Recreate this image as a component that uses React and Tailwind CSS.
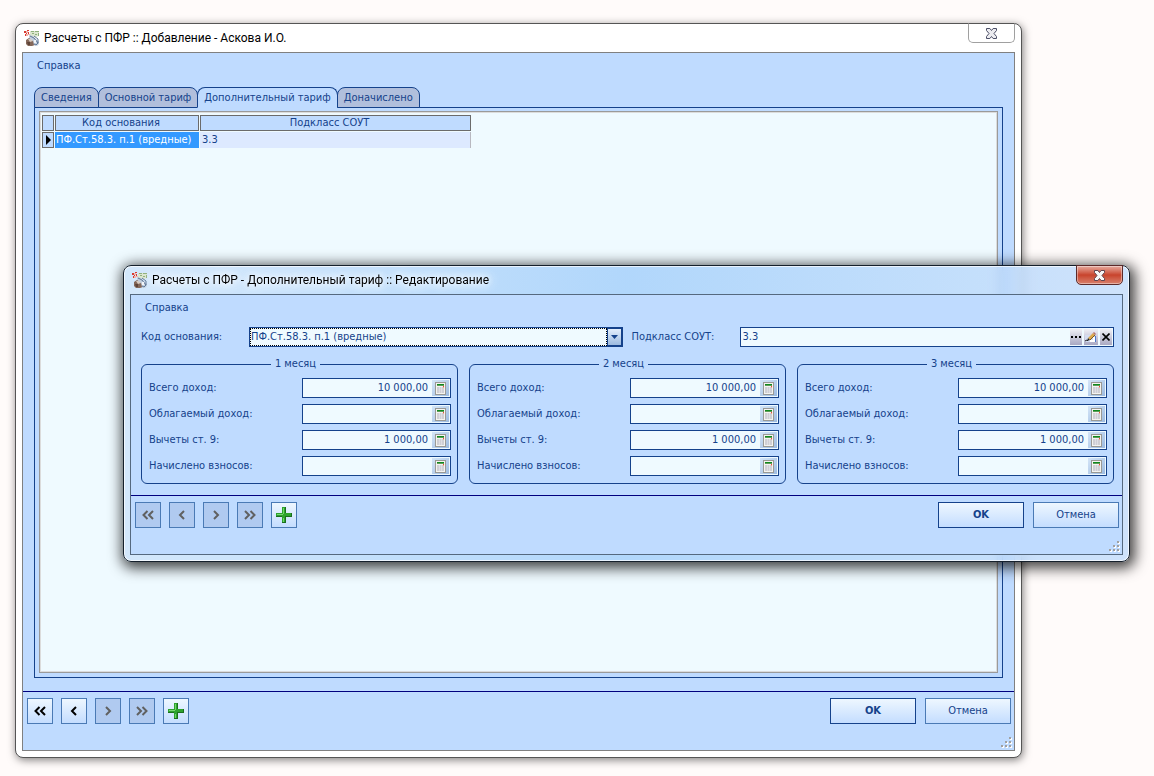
import React, { useState } from 'react';

const tabs = ['Сведения', 'Основной тариф', 'Дополнительный тариф', 'Доначислено'];

const months = [
    { id: 'm1', title: '1 месяц' },
    { id: 'm2', title: '2 месяц' },
    { id: 'm3', title: '3 месяц' },
];

const rows = [
    { id: 'total', label: 'Всего доход:', value: '10 000,00' },
    { id: 'taxable', label: 'Облагаемый доход:', value: '' },
    { id: 'deduct', label: 'Вычеты ст. 9:', value: '1 000,00' },
    { id: 'charged', label: 'Начислено взносов:', value: '' },
];

const AppIcon = () => (
    <svg width="16" height="16" viewBox="0 0 16 16" aria-hidden="true">
        <path d="M6 1h9v5l-3 1-6-1z" fill="#dbe6cf" />
        <path d="M7 1h3v1H7zM11 1h4v1h-4zM8 3h2v1H8zM14 3h1v3h-1zM11 4h2v1h-2z" fill="#8fb07c" />
        <path d="M0 1h2v2H0zM3 0h2v1H3zM1 4h1v2H1zM4 2h1v2H4zM2 3h1v1H2z" fill="#d93a30" />
        <path d="M2 1h2v2H2zM4 4h2v1H4zM2 4h2v2H2z" fill="#f0b5ae" />
        <path d="M2 10l3-2h4l2 3v4l-3 1H4l-2-2z" fill="#84685a" />
        <path d="M4 9h4l1 2-3 1z" fill="#d9cbc0" />
        <path d="M5 5l4 1 6 6v2l-2 2-3-1-1-4-4-3z" fill="#c3cfde" />
        <path d="M6 6l4 2 4 5M10 6l4 3v4l-2 2-2-1" stroke="#5d7594" strokeWidth="1" fill="none" />
        <path d="M10 10h2v3h-2z" fill="#f2f5f9" />
        <path d="M3 12h3v3H4z" fill="#5f4438" />
    </svg>
);

const CloseCross = ({ dark }) => (
    <svg width="13" height="11" viewBox="0 0 13 11" aria-hidden="true">
        <path
            d="M1.500.5h3.400l1.600 2 1.600-2h3.400v2L9 5.500l2.500 3v2H8.100l-1.600-2-1.600 2H1.500v-2l2.500-3-2.500-3z"
            fill={dark ? '#ececf0' : '#f7f7f7'}
            stroke={dark ? '#4b4e66' : '#5f4550'}
            strokeWidth="1"
        />
    </svg>
);

const Chevrons = ({ dir, double }) => (
    <svg
        width="14"
        height="10"
        viewBox="0 0 14 10"
        fill="none"
        stroke="currentColor"
        strokeWidth="2"
        className={dir === 'right' ? 'rotate-180' : ''}
        aria-hidden="true"
    >
        {double ? <path d="M6.500 1L2.500 5l4 4M12 1L8 5l4 4" /> : <path d="M9 1L5 5l4 4" />}
    </svg>
);

const Plus = () => (
    <svg width="16" height="16" viewBox="0 0 16 16" aria-hidden="true">
        <path d="M6 0h4v6h6v4h-6v6H6v-6H0V6h6z" fill="#1b6e1f" />
        <path d="M6 0h3v6h6v3H9v6H6V9H0V6h6z" fill="#2ea32e" />
        <path d="M7 1h1v6H7zM7 11h1v4H7z" fill="#6fd868" />
        <path d="M1 7h6v1H1z" fill="#7bd874" />
    </svg>
);

const Calc = () => (
    <svg width="11" height="13" viewBox="0 0 11 13" aria-hidden="true">
        <rect x=".5" y=".5" width="10" height="12" fill="#f4f4f0" stroke="#9a9a96" />
        <rect x="2" y="2" width="7" height="1" fill="#0f8a1c" />
        <rect x="2" y="3" width="7" height="1" fill="#5f9a5a" />
        <rect x="2" y="5" width="7" height="6" fill="#cfcfd4" />
        <path d="M4 5h1v6H4zM6 5h1v6H6z" fill="#dedee4" />
        <rect x="8" y="4" width="1" height="1" fill="#e8503c" />
        <rect x="8" y="5" width="1" height="1" fill="#f0a090" />
    </svg>
);

const Pencil = () => (
    <svg width="12" height="12" viewBox="0 0 12 12" aria-hidden="true">
        <path d="M0 4h6l4 2v5H0z" fill="#d4dcf2" />
        <path d="M5 10h4V6" stroke="#fff" strokeWidth="2" fill="none" />
        <path d="M10.500 5v6" stroke="#4c78cc" strokeWidth="1" />
        <path d="M3 7l5-5 2 2-5 5z" fill="#dca94e" />
        <path d="M5 9l5-5" stroke="#7a5a22" strokeWidth="1" />
        <path d="M8 2l1-1 2 2-1 1z" fill="#b5706a" />
        <path d="M3 7l2 2-3 1z" fill="#222" />
        <path d="M0 10l2-1 1 1" stroke="#222" fill="none" />
    </svg>
);

const Grip = () => (
    <svg width="12" height="12" viewBox="0 0 12 12" className="absolute right-px bottom-px" aria-hidden="true">
        <path d="M9 1h2v2H9zM5 5h2v2H5zM9 5h2v2H9zM1 9h2v2H1zM5 9h2v2H5zM9 9h2v2H9z" fill="#fff" />
        <path d="M8 0h2v2H8zM4 4h2v2H4zM8 4h2v2H8zM0 8h2v2H0zM4 8h2v2H4zM8 8h2v2H8z" fill="#a0a0a0" />
    </svg>
);

const NavButton = ({ label, disabled, children }) => (
    <button
        type="button"
        aria-label={label}
        disabled={disabled}
        className="flex size-[26px] items-center justify-center border border-[#4a7ab5] bg-linear-to-b from-[#eef7ff] to-[#c4ddff] text-black disabled:bg-[#b0caf0] disabled:bg-none disabled:text-[#606060]"
    >
        {children}
    </button>
);

const Footer = ({ allDisabled }) => (
    <footer className="relative flex items-start justify-between border-t border-[#00007f] pt-1.5 pr-[3px] pb-[26px] pl-1">
        <div className="flex gap-2">
            <NavButton label="В начало" disabled={allDisabled}><Chevrons dir="left" double /></NavButton>
            <NavButton label="Назад" disabled={allDisabled}><Chevrons dir="left" /></NavButton>
            <NavButton label="Вперёд" disabled><Chevrons dir="right" /></NavButton>
            <NavButton label="В конец" disabled><Chevrons dir="right" double /></NavButton>
            <NavButton label="Добавить"><Plus /></NavButton>
        </div>
        <div className="flex gap-[9px]">
            <button type="button" className="h-[26px] w-[86px] border border-[#15428b] bg-linear-to-b from-[#eef7ff] to-[#c4ddff] font-bold">OK</button>
            <button type="button" className="h-[26px] w-[86px] border border-[#4a7ab5] bg-linear-to-b from-[#eef7ff] to-[#c4ddff]">Отмена</button>
        </div>
        <Grip />
    </footer>
);

const Window = ({ title, modal, className, children }) => (
    <section
        className={`absolute flex flex-col rounded-lg border px-1.5 pb-1.5 ${
            modal
                ? 'border-[#15202c] bg-linear-to-r from-[#cfe4fb]/85 via-[#a6d0fb]/85 via-50% to-[#c6defb]/85 shadow-[2px_3px_14px_3px_rgba(0,0,0,0.75),inset_0_0_0_1px_rgba(255,255,255,0.7)] backdrop-blur-xs'
                : 'border-[#555] bg-white shadow-[1px_2px_8px_rgba(0,0,0,0.5)]'
        } ${className}`}
    >
        <header className="flex h-7 shrink-0 items-start justify-between">
            <h1 className="flex h-7 items-center gap-1 pl-0.5 font-[Roboto,sans-serif] text-xs text-black">
                <AppIcon />
                <span className={modal ? '[text-shadow:0_0_6px_#fff,0_0_10px_#fff,0_0_14px_#fff]' : ''}>{title}</span>
            </h1>
            <button
                type="button"
                aria-label="Закрыть"
                className={`-mt-px flex h-5 w-[47px] items-center justify-center rounded-b-[5px] border ${
                    modal
                        ? 'border-[#5c2a2a] bg-linear-to-b from-[#e5aa9f] via-[#c8432c] to-[#d8806c] shadow-[inset_0_0_0_1px_rgba(255,255,255,0.4)]'
                        : 'border-[#a0a0a0] border-t-[#555] bg-white'
                }`}
            >
                <CloseCross dark={!modal} />
            </button>
        </header>
        <div className={`flex flex-1 flex-col border bg-[#bfdbff] ${modal ? 'border-[#55697f]' : 'border-[#808080]'}`}>
            <nav className="flex h-[26px] shrink-0 items-center pl-3.5">
                <a href="#help">Справка</a>
            </nav>
            {children}
        </div>
    </section>
);

const MonthBox = ({ month }) => (
    <fieldset className="min-w-0 flex-1 rounded-md border border-[#15428b] pr-3.5 pb-[7px] pl-1.5">
        <legend className="mx-auto px-1 leading-4">{month.title}</legend>
        <div className="-mr-2 flex flex-col gap-1.5 pt-1.5 pl-px">
            {rows.map((row) => (
                <div key={row.id} className="flex items-center justify-between">
                    <label htmlFor={`${month.id}-${row.id}`} className="whitespace-nowrap">{row.label}</label>
                    <div className="flex h-5 w-[149px] items-center border border-[#15428b] bg-[#effaff] pr-px">
                        <input
                            id={`${month.id}-${row.id}`}
                            defaultValue={row.value}
                            className="min-w-0 flex-1 bg-transparent pr-1 text-right outline-none"
                        />
                        <button
                            type="button"
                            aria-label="Калькулятор"
                            className="flex h-4 w-[17px] items-center justify-center bg-linear-to-br from-[#d5e6f8] to-[#9dbbe0]"
                        >
                            <Calc />
                        </button>
                    </div>
                </div>
            ))}
        </div>
    </fieldset>
);

const App = () => {
    const [active, setActive] = useState(2);

    return (
        <main className="relative h-screen min-h-[640px] overflow-hidden bg-[#fffbfa] font-['DejaVu_Sans_Condensed','Noto_Sans',sans-serif] text-[11px] text-[#15428b]">
            <Window title="Расчеты с ПФР :: Добавление - Аскова И.О." className="top-[23px] right-[132px] bottom-[18px] left-[15px]">
                <div className="flex flex-1 flex-col px-[11px] pt-2 pb-[13px]">
                    <div role="tablist" className="relative z-10 -mb-px flex">
                        {tabs.map((tab, i) => (
                            <button
                                key={tab}
                                type="button"
                                role="tab"
                                aria-selected={i === active}
                                onClick={() => setActive(i)}
                                className={`-mr-px h-[21px] rounded-t-lg border border-[#15428b] px-1.5 pt-px ${
                                    i === active ? 'border-b-[#bfdbff] bg-[#bfdbff]' : 'bg-[#b1bfdc]'
                                }`}
                            >
                                {tab}
                            </button>
                        ))}
                    </div>
                    <div className="flex flex-1 flex-col border border-[#15428b] px-1 pt-[3px] pb-1">
                        <div className="flex-1 border border-[#9a9a9a] bg-[#effaff] p-px pt-0.5 shadow-[inset_0_0_0_1px_#dcdcdc]">
                            <table className="w-[431px] table-fixed border-separate border-spacing-px">
                                <colgroup>
                                    <col className="w-3" />
                                    <col className="w-36" />
                                    <col />
                                </colgroup>
                                <thead>
                                    <tr className="h-4 bg-[#bfdbff] leading-[14px]">
                                        <th className="border border-[#6b6b6b] p-0" aria-label="Текущая строка" />
                                        <th className="border border-[#6b6b6b] p-0 pr-3 font-normal">Код основания</th>
                                        <th className="border border-[#6b6b6b] p-0 pr-3 font-normal">Подкласс СОУТ</th>
                                    </tr>
                                </thead>
                                <tbody>
                                    <tr className="h-4 leading-[14px]">
                                        <td className="border border-[#6b6b6b] bg-[#bfdbff] p-0">
                                            <svg width="10" height="14" viewBox="0 0 10 14" aria-hidden="true">
                                                <path d="M3 2l5 5-5 5z" fill="#000" />
                                            </svg>
                                        </td>
                                        <td className="bg-[#3399ff] p-0 pl-px whitespace-nowrap text-white">ПФ.Ст.58.3. п.1 (вредные)</td>
                                        <td className="border-r border-[#b8b8c0] bg-[#dde9ff] p-0 pl-0.5">3.3</td>
                                    </tr>
                                </tbody>
                            </table>
                        </div>
                    </div>
                </div>
                <Footer />
            </Window>

            <Window modal title="Расчеты с ПФР - Дополнительный тариф :: Редактирование" className="top-[265px] right-6 left-[123px]">
                <form className="pt-1.5 pr-2 pb-[11px] pl-2.5">
                    <div className="flex items-center">
                        <label htmlFor="code" className="w-[108px]">Код основания:</label>
                        <div className="flex h-5 min-w-0 flex-1 border border-[#15428b] bg-[#effaff]">
                            <select id="code" className="min-w-0 flex-1 appearance-none border border-dotted border-black outline-none">
                                <option>ПФ.Ст.58.3. п.1 (вредные)</option>
                            </select>
                            <span className="pointer-events-none flex w-[15px] items-center justify-center border border-[#15428b] bg-linear-to-b from-[#e3eefc] to-[#9dbbe0]">
                                <svg width="7" height="4" viewBox="0 0 7 4" aria-hidden="true"><path d="M0 0h7L3.500 4z" fill="#15428b" /></svg>
                            </span>
                        </div>
                        <label htmlFor="subclass" className="w-[117px] pl-[9px]">Подкласс СОУТ:</label>
                        <div className="flex h-5 min-w-0 flex-1 items-center gap-0.5 border border-[#15428b] bg-[#effaff] pr-px">
                            <input id="subclass" defaultValue="3.3" className="min-w-0 flex-1 bg-transparent pl-0.5 outline-none" />
                            <button type="button" aria-label="Выбрать" className="flex h-4 w-3 items-center justify-center bg-linear-to-b from-[#f0f0f6] to-[#a9a8c2]">
                                <svg width="10" height="2" viewBox="0 0 10 2"><path d="M0 0h2v2H0zM4 0h2v2H4zM8 0h2v2H8z" fill="#000" /></svg>
                            </button>
                            <button type="button" aria-label="Изменить" className="flex h-4 w-3.5 items-center justify-center bg-linear-to-b from-[#f0f0f6] to-[#a9a8c2]">
                                <Pencil />
                            </button>
                            <button type="button" aria-label="Очистить" className="flex h-4 w-3 items-center justify-center bg-linear-to-b from-[#f0f0f6] to-[#a9a8c2]">
                                <svg width="8" height="8" viewBox="0 0 8 8"><path d="M.5.5l7 7M7.500.5l-7 7" stroke="#000" strokeWidth="1.600" /></svg>
                            </button>
                        </div>
                    </div>
                    <div className="flex gap-[11px] pt-[9px]">
                        {months.map((month) => (
                            <MonthBox key={month.id} month={month} />
                        ))}
                    </div>
                </form>
                <Footer allDisabled />
            </Window>
        </main>
    );
};

export default App;
